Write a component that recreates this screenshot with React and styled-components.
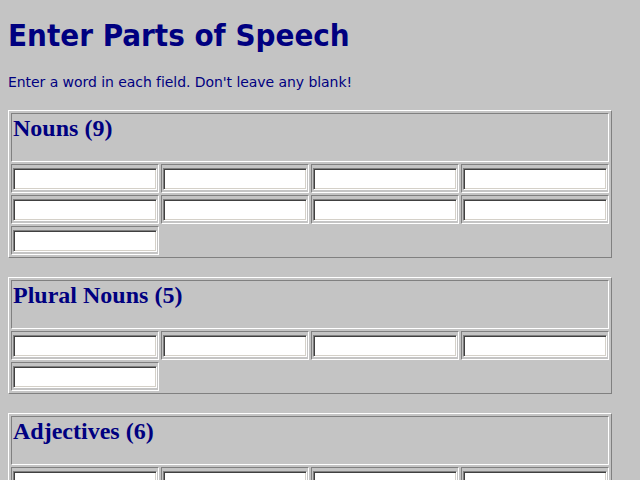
import React from "react";
import styled, { createGlobalStyle } from "styled-components";

const Global = createGlobalStyle`
  html { scrollbar-width: none; background: #c4c4c4; }
  html::-webkit-scrollbar { display: none; }
  body {
    margin: 8px;
    background: #c4c4c4;
    font-family: "Liberation Serif", serif;
  }
`;

const Title = styled.h1`
  margin: 9px 0 0;
  font-family: "DejaVu Sans Condensed", "DejaVu Sans", sans-serif;
  font-stretch: condensed;
  font-weight: bold;
  font-size: 31px;
  line-height: 36px;
  color: #000080;
`;

const Note = styled.p`
  margin: 21px 0 0;
  font-family: "DejaVu Sans", sans-serif;
  font-size: 14px;
  line-height: 16px;
  letter-spacing: -0.06px;
  color: #000080;
`;

const Form = styled.form`
  margin-top: 20px;
  display: flex;
  flex-direction: column;
  gap: 19px;
`;

const Table = styled.section`
  display: grid;
  grid-template-columns: repeat(4, 148px);
  gap: 2px;
  padding: 2px;
  width: max-content;
  border: 1px solid;
  border-color: #ffffff #808080 #808080 #ffffff;
`;

const HeadCell = styled.div`
  grid-column: 1 / -1;
  box-sizing: border-box;
  height: 49px;
  padding: 1px 1px;
  border: 1px solid;
  border-color: #808080 #ffffff #ffffff #808080;
  font-family: "Liberation Serif", "Times New Roman", serif;
  font-weight: bold;
  font-size: 24px;
  line-height: 27px;
  color: #000080;
`;

const Cell = styled.div`
  box-sizing: border-box;
  height: 29px;
  padding: 3px 1px 0;
  border: 1px solid;
  border-color: #808080 #ffffff #ffffff #808080;
  display: flex;
  align-items: flex-start;
`;

const Field = styled.input`
  box-sizing: border-box;
  width: 144px;
  height: 22px;
  margin: 0;
  padding: 0 3px;
  background: #ffffff;
  border: 1px solid;
  border-color: #808080 #ffffff #ffffff #808080;
  box-shadow: inset 1px 1px 0 #404040, inset -1px -1px 0 #d4d0c8;
  font-family: "Liberation Sans", sans-serif;
  font-size: 13px;
  outline: none;
`;

const parts = [
  { label: "Nouns", count: 9 },
  { label: "Plural Nouns", count: 5 },
  { label: "Adjectives", count: 6 },
];

function PartTable({ label, count }) {
  return (
    <Table>
      <HeadCell>
        {label} ({count})
      </HeadCell>
      {Array.from({ length: count }, (_, i) => (
        <Cell key={i}>
          <Field type="text" name={`${label}-${i}`} />
        </Cell>
      ))}
    </Table>
  );
}

export default function App() {
  return (
    <>
      <Global />
      <Title>Enter Parts of Speech</Title>
      <Note>Enter a word in each field. Don't leave any blank!</Note>
      <Form>
        {parts.map((p) => (
          <PartTable key={p.label} {...p} />
        ))}
      </Form>
    </>
  );
}
